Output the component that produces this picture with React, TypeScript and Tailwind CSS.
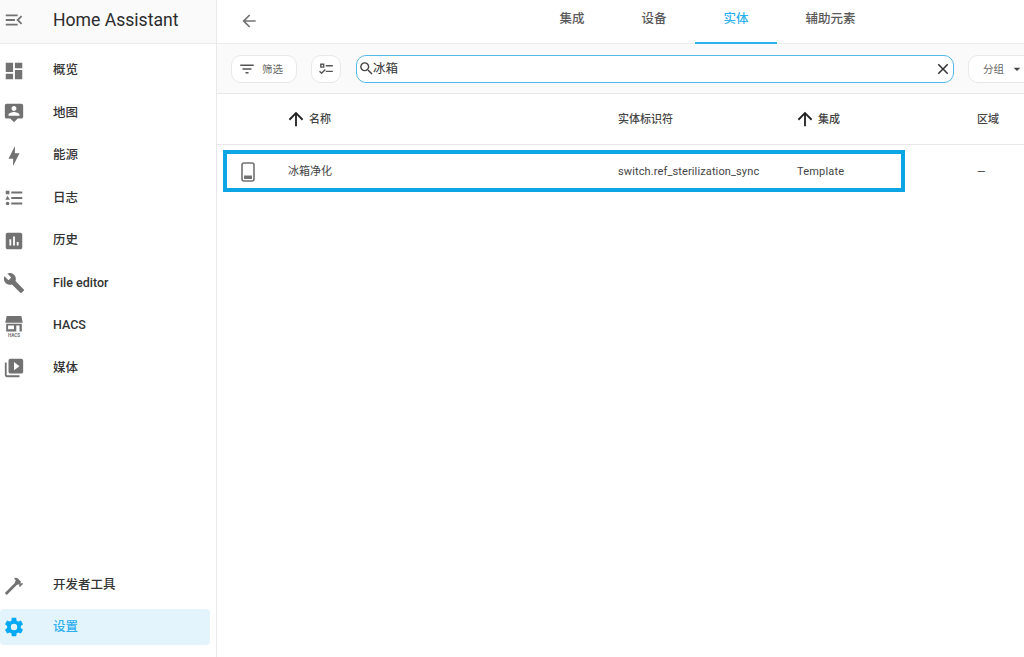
import React from "react";

const FONT = "font-['Roboto','Noto_Sans_CJK_SC',sans-serif]";

const Icon = ({ d, className = "" }: { d: string; className?: string }) => (
  <svg viewBox="0 0 24 24" fill="currentColor" fillRule="evenodd" className={className}>
    <path d={d} />
  </svg>
);

const paths = {
  menuOpen: "M21,15.61L19.59,17L14.58,12L19.59,7L21,8.39L17.44,12L21,15.61M3,6H16V8H3V6M3,13V11H13V13H3M3,18V16H16V18H3Z",
  dashboard: "M13,3V9H21V3M13,21H21V11H13M3,21H11V15H3M3,13H11V3H3V13Z",
  map: "M20 2H4C2.9 2 2 2.9 2 4V16C2 17.1 2.9 18 4 18H8L12 22L16 18H20C21.1 18 22 17.1 22 16V4C22 2.9 21.1 2 20 2M12 4.3C13.5 4.3 14.7 5.5 14.7 7S13.5 9.7 12 9.7 9.3 8.5 9.3 7 10.5 4.3 12 4.3M18 15H6V14.1C6 12.1 10 11 12 11S18 12.1 18 14.1V15Z",
  bolt: "M11 15H6L13 1V9H18L11 23V15Z",
  list: "M5,9.5L7.5,14H2.5L5,9.5M3,4H7V8H3V4M5,20A2,2 0 0,0 7,18A2,2 0 0,0 5,16A2,2 0 0,0 3,18A2,2 0 0,0 5,20M9,5V7H21V5H9M9,19H21V17H9V19M9,13H21V11H9V13Z",
  chart: "M19 3H5C3.9 3 3 3.9 3 5V19C3 20.1 3.9 21 5 21H19C20.1 21 21 20.1 21 19V5C21 3.9 20.1 3 19 3M9 17H7V10H9V17M13 17H11V7H13V17M17 17H15V13H17V17Z",
  wrench: "M22.7,19L13.6,9.9C14.5,7.6 14,4.9 12.1,3C10.1,1 7.1,0.6 4.7,1.7L9,6L6,9L1.6,4.7C0.4,7.1 0.9,10.1 2.9,12.1C4.8,14 7.5,14.5 9.8,13.6L18.9,22.7C19.3,23.1 19.9,23.1 20.3,22.7L22.6,20.4C23.1,20 23.1,19.3 22.7,19Z",
  media: "M4,6H2V20A2,2 0 0,0 4,22H18V20H4V6M20,2A2,2 0 0,1 22,4V16A2,2 0 0,1 20,18H8A2,2 0 0,1 6,16V4A2,2 0 0,1 8,2H20M12,14.5L18,10L12,5.5V14.5Z",
  hammer: "M2 19.63L13.43 8.2L12.72 7.5L14.14 6.07L12 3.89C13.2 2.7 15.09 2.7 16.27 3.89L19.87 7.5L18.45 8.91H21.29L22 9.62L18.45 13.21L17.74 12.5V9.62L16.27 11.04L15.56 10.33L4.13 21.76L2 19.63Z",
  cog: "M12,15.5A3.5,3.5 0 0,1 8.5,12A3.5,3.5 0 0,1 12,8.5A3.5,3.5 0 0,1 15.5,12A3.5,3.5 0 0,1 12,15.5M19.43,12.97C19.47,12.65 19.5,12.33 19.5,12C19.5,11.67 19.47,11.34 19.43,11L21.54,9.37C21.73,9.22 21.78,8.95 21.66,8.73L19.66,5.27C19.54,5.05 19.27,4.96 19.05,5.05L16.56,6.05C16.04,5.66 15.5,5.32 14.87,5.07L14.5,2.42C14.46,2.18 14.25,2 14,2H10C9.75,2 9.54,2.18 9.5,2.42L9.13,5.07C8.5,5.32 7.96,5.66 7.44,6.05L4.95,5.05C4.73,4.96 4.46,5.05 4.34,5.27L2.34,8.73C2.21,8.95 2.27,9.22 2.46,9.37L4.57,11C4.53,11.34 4.5,11.67 4.5,12C4.5,12.33 4.53,12.65 4.57,12.97L2.46,14.63C2.27,14.78 2.21,15.05 2.34,15.27L4.34,18.73C4.46,18.95 4.73,19.03 4.95,18.95L7.44,17.94C7.96,18.34 8.5,18.68 9.13,18.93L9.5,21.58C9.54,21.82 9.75,22 10,22H14C14.25,22 14.46,21.82 14.5,21.58L14.87,18.93C15.5,18.67 16.04,18.34 16.56,17.94L19.05,18.95C19.27,19.03 19.54,18.95 19.66,18.73L21.66,15.27C21.78,15.05 21.73,14.78 21.54,14.63L19.43,12.97Z",
  back: "M20,11V13H8L13.5,18.5L12.08,19.92L4.16,12L12.08,4.08L13.5,5.5L8,11H20Z",
  filter: "M6,13H18V11H6M3,6V8H21V6M10,18H14V16H10V18Z",
  checks: "M3 5H9V11H3V5M5 7V9H7V7H5M11 7H21V9H11V7M11 15H21V17H11V15M5 20L1.5 16.5L2.91 15.09L5 17.17L9.59 12.59L11 14L5 20Z",
  search: "M9.5,3A6.5,6.5 0 0,1 16,9.5C16,11.11 15.41,12.59 14.44,13.73L14.71,14H15.5L20.5,19L19,20.5L14,15.5V14.71L13.73,14.44C12.59,15.41 11.11,16 9.5,16A6.5,6.5 0 0,1 3,9.5A6.5,6.5 0 0,1 9.5,3M9.5,5C7,5 5,7 5,9.5C5,12 7,14 9.5,14C12,14 14,12 14,9.5C14,7 12,5 9.5,5Z",
  close: "M19,6.41L17.59,5L12,10.59L6.41,5L5,6.41L10.59,12L5,17.59L6.41,19L12,13.41L17.59,19L19,17.59L13.41,12L19,6.41Z",
  up: "M13,20H11V8L5.5,13.5L4.08,12.08L12,4.16L19.92,12.08L18.5,13.5L13,8V20Z",
  down: "M7,10L12,15L17,10H7Z",
};

const HacsIcon = () => (
  <svg viewBox="0 0 24 24" className="w-[22px] h-[22px] text-[#727272]" fill="currentColor">
    <path d="M4 1H20L21.5 8.5H2.5Z" />
    <path
      fillRule="evenodd"
      d="M3.5 9.5H20.5V18H3.5ZM5.5 11.5V15.5H12V11.5ZM14.5 11.5V18H18V11.5Z"
    />
    <text x="12" y="23.5" textAnchor="middle" fontSize="5" fontWeight="700" fontFamily="Roboto, sans-serif">
      HACS
    </text>
  </svg>
);

const NavRow = ({ icon, label }: { icon: React.ReactNode; label: string }) => (
  <div className="flex items-center h-[42.5px] pl-[3px]">
    <div className="w-[22px] h-[22px] text-[#727272] flex items-center justify-center shrink-0">{icon}</div>
    <span className="ml-[28px] text-[12.5px] font-medium text-[#333]">{label}</span>
  </div>
);

const Sidebar = () => (
  <aside className="w-[217px] shrink-0 h-full flex flex-col border-r border-[#e8e8e8] bg-white">
    <div className="h-[44px] shrink-0 flex items-center pl-[3px] pb-[3px] bg-[#fafafa] border-b border-[#ececec]">
      <Icon d={paths.menuOpen} className="w-[22px] h-[22px] text-[#727272]" />
      <span className="ml-[28px] text-[17.6px] text-[#2b2b2b]">Home Assistant</span>
    </div>
    <nav className="pt-[5.5px] flex flex-col">
      <NavRow icon={<Icon d={paths.dashboard} className="w-[22px] h-[22px]" />} label="概览" />
      <NavRow icon={<Icon d={paths.map} className="w-[22px] h-[22px]" />} label="地图" />
      <NavRow icon={<Icon d={paths.bolt} className="w-[22px] h-[22px]" />} label="能源" />
      <NavRow icon={<Icon d={paths.list} className="w-[22px] h-[22px]" />} label="日志" />
      <NavRow icon={<Icon d={paths.chart} className="w-[22px] h-[22px]" />} label="历史" />
      <NavRow icon={<Icon d={paths.wrench} className="w-[22px] h-[22px]" />} label="File editor" />
      <NavRow icon={<HacsIcon />} label="HACS" />
      <NavRow icon={<Icon d={paths.media} className="w-[22px] h-[22px]" />} label="媒体" />
    </nav>
    <div className="mt-auto pb-[12px] flex flex-col">
      <NavRow icon={<Icon d={paths.hammer} className="w-[22px] h-[22px]" />} label="开发者工具" />
      <div className="flex items-center h-[36px] pl-[3px] w-[210px] bg-[#e4f4fd] rounded-[4px] mt-[2px]">
        <Icon d={paths.cog} className="w-[22px] h-[22px] text-[#03a9f4]" />
        <span className="ml-[28px] text-[12.5px] font-medium text-[#2fb0ee]">设置</span>
      </div>
    </div>
  </aside>
);

const Tab = ({ label, active = false }: { label: string; active?: boolean }) => (
  <div
    className={
      active
        ? "h-[44px] px-[28.5px] pb-[2px] flex items-center text-[12.5px] font-medium text-[#2fb0ee] border-b-2 border-[#2fb0ee]"
        : "h-[44px] px-[28.5px] pb-[2px] flex items-center text-[12.5px] font-medium text-[#5a5a5a] border-b-2 border-transparent"
    }
  >
    {label}
  </div>
);

const Toolbar = () => (
  <div className="h-[50px] shrink-0 flex items-center pl-[14px] bg-[#fafafa] border-b border-[#e8e8e8]">
    <div className="h-[28px] w-[66px] shrink-0 flex items-center pl-[6px] bg-white border border-[#e8e8e8] rounded-[10px]">
      <Icon d={paths.filter} className="w-[18px] h-[18px] text-[#555]" />
      <span className="ml-[6px] pt-[2px] text-[10.5px] text-[#666]">筛选</span>
    </div>
    <div className="h-[28px] w-[30px] ml-[14px] shrink-0 flex items-center justify-center bg-white border border-[#e8e8e8] rounded-[10px]">
      <Icon d={paths.checks} className="w-[17px] h-[17px] text-[#555]" />
    </div>
    <div className="h-[28px] w-[598px] ml-[15px] shrink-0 flex items-center pl-[1px] pr-[1px] bg-white border border-[#53b9e8] rounded-[10px]">
      <Icon d={paths.search} className="w-[17px] h-[17px] text-[#444]" />
      <span className="-ml-[2px] pt-[2px] text-[12.5px] text-[#333]">冰箱</span>
      <Icon d={paths.close} className="w-[18px] h-[18px] ml-auto text-[#333]" />
    </div>
    <div className="h-[28px] w-[72px] ml-[14px] shrink-0 flex items-center pl-[14px] bg-white border border-[#e8e8e8] rounded-l-[10px]">
      <span className="pt-[2px] text-[10.5px] text-[#666]">分组</span>
      <Icon d={paths.down} className="w-[16px] h-[16px] ml-[5px] text-[#444]" />
    </div>
  </div>
);

const tableCols = "grid grid-cols-[71px_330px_179px_180px_1fr] items-center";

const HeaderCell = ({ label, sorted = false }: { label: string; sorted?: boolean }) => (
  <div className="flex items-center h-[22px] text-[11px] font-medium text-[#444]">
    {sorted && <Icon d={paths.up} className="w-[22px] h-[22px] mr-[2.5px] -ml-[3.5px] text-[#222]" />}
    <span className="pt-[2px]">{label}</span>
  </div>
);

export default function App() {
  return (
    <div className={`${FONT} w-[1024px] h-[657px] flex overflow-hidden bg-white`}>
      <Sidebar />
      <main className="flex-1 min-w-0 flex flex-col">
        <div className="h-[44px] shrink-0 flex items-center pl-[22px] border-b border-[#ececec]">
          <Icon d={paths.back} className="w-[20px] h-[20px] text-[#727272] -mt-[2px]" />
          <div className="ml-[272px] flex">
            <Tab label="集成" />
            <Tab label="设备" />
            <Tab label="实体" active />
            <Tab label="辅助元素" />
          </div>
        </div>
        <Toolbar />
        <div className={`${tableCols} h-[51px] shrink-0 border-b border-[#e8e8e8]`}>
          <div />
          <HeaderCell label="名称" sorted />
          <HeaderCell label="实体标识符" />
          <HeaderCell label="集成" sorted />
          <HeaderCell label="区域" />
        </div>
        <div className={`${tableCols} relative h-[52px] pt-[2px] shrink-0 text-[11px] text-[#444]`}>
          <div className="flex justify-center pl-[1px] pr-[10px]">
            <svg viewBox="0 0 14 20" className="w-[14px] h-[20px] text-[#727272]" fill="none">
              <rect x="1" y="1" width="12" height="18" rx="2" stroke="currentColor" strokeWidth="1.6" />
              <rect x="3" y="13.5" width="8" height="3.5" fill="currentColor" />
            </svg>
          </div>
          <div>冰箱净化</div>
          <div className="tracking-[0.12px]">switch.ref_sterilization_sync</div>
          <div className="tracking-[0.2px]">Template</div>
          <div>—</div>
          <div className="absolute left-[6px] top-[5px] w-[682px] h-[42px] border-[4px] border-[#0ea5e4]" />
        </div>
      </main>
    </div>
  );
}
